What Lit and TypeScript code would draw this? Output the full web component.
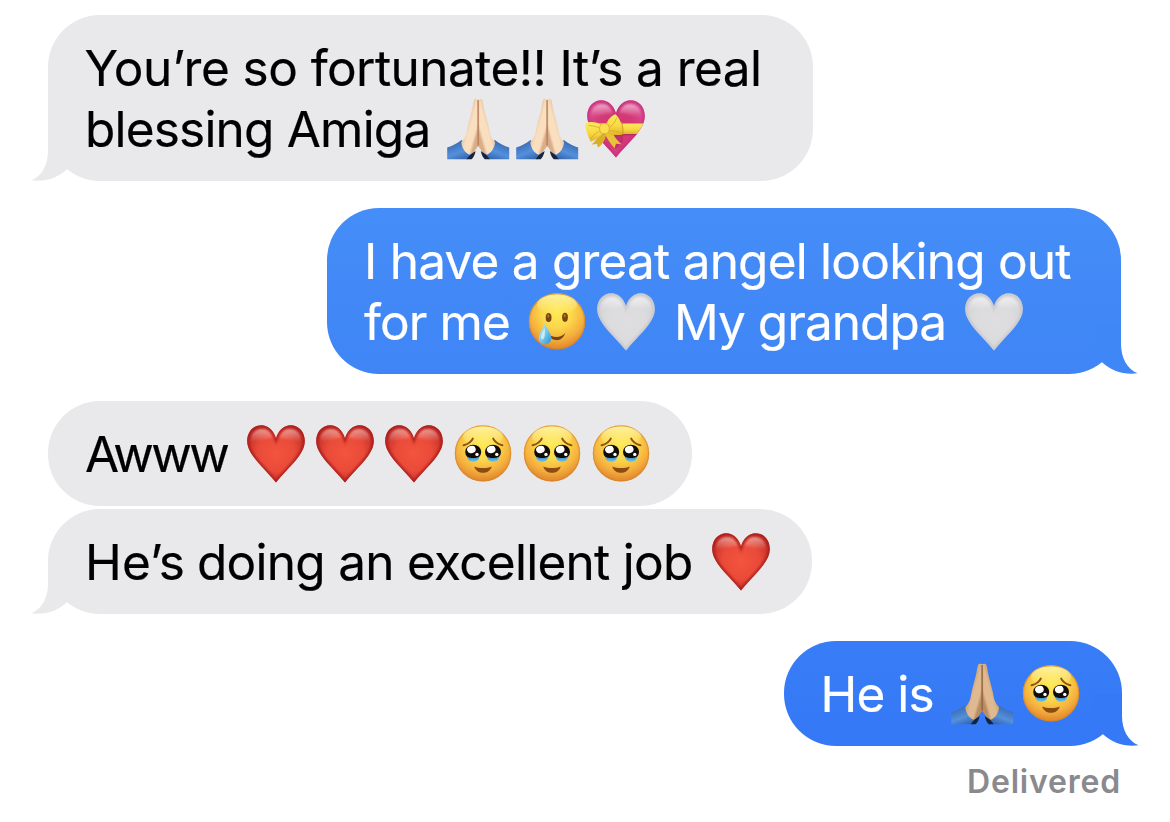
import { LitElement, html, css, svg, nothing } from "lit";
import { customElement, property } from "lit/decorators.js";
import { classMap } from "lit/directives/class-map.js";

const HEART =
  "M31 15.2 C28.4 7 23 2.2 16.5 2.2 C8 2.2 2.2 9 2.2 18 C2.2 31.500 17.500 43 31 59.500 C44.500 43 59.800 31.500 59.800 18 C59.800 9 54 2.200 45.500 2.200 C39 2.200 33.600 7 31 15.200 Z";

const heartArt = (stops: string[], edge: string, rim: number, shine: number) => svg`
  <defs>
    <radialGradient id="fill" gradientUnits="userSpaceOnUse" cx="31" cy="30" r="33">
      <stop offset="0" stop-color=${stops[0]} /><stop offset=".55" stop-color=${stops[1]} /><stop offset="1" stop-color=${stops[2]} />
    </radialGradient>
    <linearGradient id="shine" x1="0" y1="0" x2="0" y2="1">
      <stop offset="0" stop-color="#fff" stop-opacity=${shine} /><stop offset=".75" stop-color="#fff" stop-opacity="0" />
    </linearGradient>
    <filter id="soft" x="-20%" y="-20%" width="140%" height="140%"><feGaussianBlur stdDeviation="1" /></filter>
    <clipPath id="clip"><path d=${HEART} /></clipPath>
  </defs>
  <path d=${HEART} fill="url(#fill)" />
  <g clip-path="url(#clip)">
    <path d="M6 17 C6 10 11 6 17 6 C23 6 26 9 28 15 C22 15 12 17 6 23 Z" fill="url(#shine)" filter="url(#soft)" />
    <path d="M56 17 C56 10 51 6 45 6 C39 6 36 9 34 15 C40 15 50 17 56 23 Z" fill="url(#shine)" filter="url(#soft)" />
    <path d=${HEART} fill="none" stroke=${edge} stroke-width="4" stroke-opacity=${rim} filter="url(#soft)" />
  </g>`;

const faceBase = svg`
  <defs>
    <radialGradient id="skin" gradientUnits="userSpaceOnUse" cx="31" cy="21" r="38">
      <stop offset="0" stop-color="#fdea55" /><stop offset=".4" stop-color="#fcd84b" />
      <stop offset=".72" stop-color="#f5b03d" /><stop offset="1" stop-color="#dd812c" />
    </radialGradient>
    <linearGradient id="glow" x1="0" y1="0" x2="0" y2="1">
      <stop offset="0" stop-color="#fff9b8" stop-opacity=".8" /><stop offset="1" stop-color="#fff59a" stop-opacity="0" />
    </linearGradient>
    <linearGradient id="tear" x1="0" y1="0" x2="1" y2="1">
      <stop offset="0" stop-color="#d4f3fb" /><stop offset=".5" stop-color="#73c9f0" /><stop offset="1" stop-color="#2b8fd6" />
    </linearGradient>
  </defs>
  <circle cx="31" cy="30.400" r="28.200" fill="url(#skin)" />
  <circle cx="31" cy="30.400" r="27.600" fill="none" stroke="#d08328" stroke-opacity=".6" stroke-width="1.200" />
  <ellipse cx="31" cy="13.500" rx="20" ry="10" fill="url(#glow)" />`;

const pleadingEye = (x: number) => svg`
  <path d="M${x - 6.500} 33 C${x - 6} 40.600 ${x + 6} 40.600 ${x + 6.500} 33 Z" fill="#66b9e2" />
  <ellipse cx=${x} cy="28.900" rx="8" ry="7.200" fill="#120b08" />
  <ellipse cx=${x - 1.800} cy="26.500" rx="4.400" ry="3.600" transform="rotate(-18 ${x - 1.800} 26.500)" fill="#fff" />
  <circle cx=${x + 3.800} cy="31.400" r="1.700" fill="#fff" />
  <path d="M${x - 5.600} 34 C${x - 3} 35.300 ${x + 3} 35.300 ${x + 5.600} 34 L${x + 4} 36.500 L${x - 4} 36.500 Z" fill="#4a9dcc" />`;

const holdingTears = svg`
  ${faceBase}
  <path d="M11.600 22.300 C15.500 21.300 19.200 19 20.800 15.600 M50.400 22.300 C46.500 21.300 42.800 19 41.200 15.600"
    fill="none" stroke="#8c5313" stroke-width="2" stroke-linecap="round" />
  ${pleadingEye(21.200)}${pleadingEye(41)}
  <path d="M22.300 43.400 C27 45.600 35 45.600 39.700 43.400 C37.800 51.800 24.200 51.800 22.300 43.400 Z" fill="#8a4c10" />`;

const smilingTear = svg`
  ${faceBase}
  <ellipse cx="22.600" cy="26.500" rx="2.900" ry="4.600" fill="#7a4410" />
  <ellipse cx="39" cy="26.300" rx="2.900" ry="4.600" fill="#7a4410" />
  <ellipse cx="22.300" cy="25" rx="1" ry="1.700" fill="#a9733a" />
  <ellipse cx="38.700" cy="24.800" rx="1" ry="1.700" fill="#a9733a" />
  <path d="M25 44.800 C30 47.300 36 46 39.200 42 C37 49 31 50.800 25.300 47.600 Z" fill="#7a4410" />
  <path d="M18.700 32.200 C20.500 37.500 25.200 42 25.200 47 C25.200 51 22.300 53.300 19 53.300 C15.600 53.300 12.800 51 12.800 47 C12.800 42 17.300 38 18.700 32.200 Z" fill="url(#tear)" />
  <path d="M18.500 37 C17 41 14.800 43.500 15 47.500 C17 50 20 47 18.500 37 Z" fill="#fff" fill-opacity=".6" />`;

const hands = (c: { light: string; mid: string; dark: string; line: string }) => {
  const half = svg`
    <path d="M.2 49.600 C5 48 10 45.500 14.500 42 L27.500 54 L20.600 61.300 L.2 61.300 Z" fill="url(#sleeve)" />
    <path d="M19.800 61.300 C21 58.500 24.500 55.500 28.600 53 C28 57 26 60 24.600 61.300 Z" fill="#15233c" />
    <path d="M31.400 1.400 C30 .6 27.800 .6 27 2 C26 4.200 25.900 8.500 24.700 13 C23.200 19 21.400 25 20.300 30.500
      C19.500 36 18 41 14.300 44 C14.700 49.500 17.500 54.500 22.500 56.700 C25.500 55.500 28 53 29 51 C29.800 49.500 30.700 48.800 31.500 48 Z"
      fill="url(#palm)" />
    <path d="M31 2 L31 47.500" stroke=${c.line} stroke-opacity=".85" stroke-width="1.300" />`;
  return svg`
    <defs>
      <linearGradient id="palm" gradientUnits="userSpaceOnUse" x1="18" y1="26" x2="32" y2="30">
        <stop offset="0" stop-color=${c.mid} /><stop offset=".4" stop-color=${c.light} /><stop offset=".8" stop-color=${c.light} /><stop offset="1" stop-color=${c.dark} />
      </linearGradient>
      <linearGradient id="sleeve" gradientUnits="userSpaceOnUse" x1="7" y1="46" x2="14" y2="64">
        <stop offset="0" stop-color="#3d6fb8" /><stop offset=".5" stop-color="#5490dc" /><stop offset="1" stop-color="#3260a8" />
      </linearGradient>
    </defs>
    <g>${half}</g>
    <g transform="translate(62.400 0) scale(-1 1)">${half}</g>`;
};

const giftHeart = svg`
  ${heartArt(["#d23470", "#d43a78", "#dc4c92"], "#c22f7c", 0.75, 0.55)}
  <defs>
    <linearGradient id="gold" x1="0" y1="0" x2="0" y2="1">
      <stop offset="0" stop-color="#fbea5c" /><stop offset=".55" stop-color="#f8d944" /><stop offset="1" stop-color="#e2b22a" />
    </linearGradient>
  </defs>
  <g clip-path="url(#clip)">
    <path d="M0 25.500 H62 V36 H0 Z" fill="url(#gold)" />
    <path d="M16 36 H62 V37.200 H16 Z" fill="#8f1648" fill-opacity=".4" />
    <path d="M20 37 L38 37 L38 44 L31 51 L24 44 Z" fill="#9c1a50" fill-opacity=".3" />
  </g>
  <path d="M15 33 C13.500 39 10.500 43 6.700 46.500 L12 46 L13 49.500 C18 46.500 21 41 21.500 34 Z" fill="#d8ae2c" />
  <path d="M19 33 C21 40 25 45 29.500 50.300 L31 45.800 L36.700 46.300 C31.500 42 29 38 26.500 33 Z" fill="#e8c238" />
  <path d="M17 27.500 C12 23.800 5 23.200 .6 25.300 C.2 31 2.500 38 5.800 43.800 C11 41.500 15.500 38.500 18.500 34.500 Z" fill="url(#gold)" />
  <path d="M21 26.500 C23 21.500 26.500 17.500 30.500 16.300 C35.500 21.500 38.500 29 37.600 36.500 C32 37.800 26 37 21.500 34.500 Z" fill="url(#gold)" />
  <path d="M4 27.500 C8 27.500 12 28.500 15.500 30.500 M6 40.500 C8 37 11.500 34.500 15 33 M25 29 C28 27 30.500 23.500 31.500 20 M25 32.500 C29 33 33 33.500 36 35"
    fill="none" stroke="#d3a325" stroke-opacity=".7" stroke-width="1" stroke-linecap="round" />
  <path d="M36.500 24 C38 29 38.300 33 37.600 36.600" fill="none" stroke="#c4931c" stroke-width=".9" />
  <rect x="14.600" y="25.500" width="9.600" height="10.200" rx="4" fill="#fae04e" stroke="#d3a325" stroke-width=".7" />`;

const ART: Record<string, unknown> = {
  red: heartArt(["#f2543f", "#ea4b39", "#bf2a24"], "#a51c1c", 0.8, 0.5),
  white: heartArt(["#dedee0", "#dcdcde", "#d3d3d6"], "#c0c0c6", 0.6, 0.6),
  gift: giftHeart,
  tears: holdingTears,
  smile: smilingTear,
  pray: hands({ light: "#f9dfbf", mid: "#e3bf9a", dark: "#d9ad88", line: "#b9805f" }),
  praytan: hands({ light: "#dfb98f", mid: "#c39a6c", dark: "#b98c62", line: "#946640" }),
};

@customElement("chat-emoji")
export class ChatEmoji extends LitElement {
  @property() kind = "red";

  static styles = css`
    :host { display: block; flex: none; width: 62px; height: 62px; }
    svg { display: block; overflow: visible; }
  `;

  render() {
    return html`<svg width="62" height="62" viewBox="0 0 62 62" aria-hidden="true">${ART[this.kind]}</svg>`;
  }
}

type Part = { text: string; cls: string } | { emoji: string[] };
interface Message {
  cls: string;
  sent: boolean;
  tail: boolean;
  lines: Part[][];
}

const MESSAGES: Message[] = [
  {
    cls: "m1", sent: false, tail: true,
    lines: [
      [{ text: "You’re so fortunate!! It’s a real", cls: "t1" }],
      [{ text: "blessing Amiga", cls: "t2" }, { emoji: ["pray", "pray", "gift"] }],
    ],
  },
  {
    cls: "m2", sent: true, tail: true,
    lines: [
      [{ text: "I have a great angel looking out", cls: "t3" }],
      [{ text: "for me", cls: "t4" }, { emoji: ["smile", "white"] }, { text: "My grandpa", cls: "t5" }, { emoji: ["white"] }],
    ],
  },
  {
    cls: "m3", sent: false, tail: false,
    lines: [[{ text: "Awww", cls: "t6" }, { emoji: ["red", "red", "red", "tears", "tears", "tears"] }]],
  },
  {
    cls: "m4", sent: false, tail: true,
    lines: [[{ text: "He’s ", cls: "t7a" }, { text: "doing an excellent job", cls: "t7b" }, { emoji: ["red"] }]],
  },
  {
    cls: "m5", sent: true, tail: true,
    lines: [[{ text: "He is", cls: "t8" }, { emoji: ["praytan", "tears"] }]],
  },
];

@customElement("app-root")
export class AppRoot extends LitElement {
  static styles = css`
    :host {
      display: block;
      height: 822px;
      overflow: hidden;
      background: #fff;
      font-family: Inter, "Liberation Sans", sans-serif;
    }
    .thread { display: flex; flex-direction: column; align-items: flex-start; padding: 15px 49px 0 48px; }
    .bubble {
      position: relative;
      box-sizing: border-box;
      padding: 23px 38px 20px 37px;
      border-radius: 52px;
      background: #e9e9eb;
      color: #000;
    }
    .sent { align-self: flex-end; color: #fff; }
    .m1 { width: 765px; height: 166px; }
    .m2 { width: 794px; height: 166px; margin-top: 27px; background: linear-gradient(#458df8, #3f85f6); }
    .m3 { width: 644px; height: 105px; margin-top: 27px; }
    .m4 { width: 764px; height: 105px; margin-top: 3px; }
    .m5 { width: 338px; height: 105px; margin-top: 27px; margin-right: -1px; background: linear-gradient(#387df7, #3578f6); }
    .tail { position: absolute; left: -16px; bottom: 0; display: block; overflow: visible; color: #e9e9eb; }
    .sent .tail { left: auto; right: -16px; transform: scaleX(-1); }
    .m2 .tail { color: #3f86f6; }
    .m5 .tail { color: #3579f6; }
    .line { display: flex; height: 61px; }
    .text { flex: none; font-size: 49.5px; line-height: 61px; white-space: pre; -webkit-text-stroke: 0.2px currentColor; }
    .emojis { display: flex; gap: 7px; margin-top: -1px; }
    .t1 { margin-left: -0.5px; letter-spacing: -0.55px; }
    .t2 { width: 362px; letter-spacing: -0.8px; }
    .t3 { letter-spacing: -0.78px; }
    .t4 { width: 162px; letter-spacing: -0.9px; }
    .t5 { width: 289px; margin-left: 17px; letter-spacing: -0.95px; }
    .t6 { width: 160px; letter-spacing: -2.5px; }
    .t7a { width: 112px; letter-spacing: 0.1px; }
    .t7b { width: 513px; letter-spacing: -0.72px; }
    .t8 { margin-left: -0.5px; width: 130.5px; letter-spacing: -0.9px; }
    .status {
      align-self: flex-end;
      margin-top: 16px;
      font-size: 32px;
      line-height: 40px;
      font-weight: 600;
      letter-spacing: 0.8px;
      color: #8a8a8e;
    }
  `;

  private part(p: Part) {
    return "text" in p
      ? html`<span class="text ${p.cls}">${p.text}</span>`
      : html`<span class="emojis">${p.emoji.map((k) => html`<chat-emoji kind=${k}></chat-emoji>`)}</span>`;
  }

  private bubble(m: Message) {
    return html`<div class=${classMap({ bubble: true, sent: m.sent, [m.cls]: true })}>
      ${m.tail
        ? html`<svg class="tail" width="46" height="52" viewBox="0 0 46 52" aria-hidden="true">
            <path d="M16 0 V22 C16 36 9.500 47.500 -.6 51.300 C14 53 26 48.500 35 40.200 L45 30 V0 Z" fill="currentColor" />
          </svg>`
        : nothing}
      ${m.lines.map((l) => html`<div class="line">${l.map((p) => this.part(p))}</div>`)}
    </div>`;
  }

  render() {
    return html`<main class="thread">
      ${MESSAGES.map((m) => this.bubble(m))}
      <div class="status">Delivered</div>
    </main>`;
  }
}
